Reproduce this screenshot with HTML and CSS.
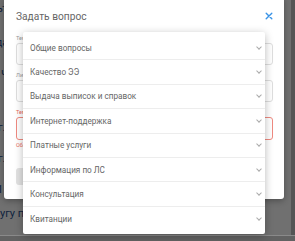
FILE: index.html
```html
<!DOCTYPE html>
<html lang="ru">
<head>
    <meta charset="UTF-8">
    <meta name="viewport" content="width=device-width, initial-scale=1.0">
    <title>Задать вопрос</title>
    <link rel="stylesheet" href="styles.css">
</head>
<body>
    <!-- Page behind the dialog -->
    <div class="page">
        <p class="link line-1">Консультация по тарифам и начислениям подробнее</p>
        <p class="link line-2">Передать показания и получить ответ по обращению</p>
        <p class="link line-3">1 Частые вопросы</p>
        <p class="link line-4">г. Обслуживание</p>
        <p class="link line-5">г. Центры</p>
        <p class="link line-6">1 Документы</p>
        <p class="link line-7">угу по ЛС</p>
    </div>

    <div class="backdrop"></div>
    <div class="scrollbar"></div>
    <div class="hbar"></div>

    <div class="modal">
        <div class="modal-head">
            <span class="modal-title">Задать вопрос</span>
            <svg class="close" width="8" height="8" viewBox="0 0 8 8">
                <path d="M1.2 1.2 L6.8 6.8 M6.8 1.2 L1.2 6.8" stroke="#3a93e6" stroke-width="1.4" stroke-linecap="round"/>
            </svg>
        </div>
        <div class="form">
            <label class="label">Тема</label>
            <div class="input"></div>
            <label class="label">Лицевой счёт</label>
            <div class="input"></div>
            <label class="label error">Тема вопроса</label>
            <div class="input invalid"></div>
            <span class="hint error">Обязательное поле</span>
            <button class="btn">Отправить</button>
        </div>
    </div>

    <ul class="menu">
        <li>Общие вопросы</li>
        <li>Качество ЭЭ</li>
        <li>Выдача выписок и справок</li>
        <li>Интернет-поддержка</li>
        <li>Платные услуги</li>
        <li>Информация по ЛС</li>
        <li>Консультация</li>
        <li>Квитанции</li>
    </ul>
</body>
</html>
```

FILE: styles.css
```css
body {
    margin: 0;
    width: 295px;
    height: 241px;
    overflow: hidden;
    font-family: Roboto, 'Liberation Sans', sans-serif;
    background-color: #fff;
    position: relative;
}

.link {
    position: absolute;
    margin: 0;
    left: -2px;
    font-size: 11px;
    color: #1f4f8f;
    white-space: nowrap;
}

.line-1 { top: 2px; left: -40px; }
.line-2 { top: 36px; left: -30px; }
.line-3 { top: 68px; left: -8px; }
.line-4 { top: 121px; }
.line-5 { top: 152px; }
.line-6 { top: 183px; left: -3px; }
.line-7 { top: 207px; left: 0; }

.backdrop {
    position: absolute;
    inset: 0;
    background: rgba(0, 0, 0, 0.56);
}

.scrollbar {
    position: absolute;
    top: 0;
    right: 0;
    width: 4px;
    height: 236px;
    background: #555;
}

.hbar {
    position: absolute;
    left: 0;
    bottom: 0;
    width: 295px;
    height: 5px;
    background: #626262;
    border-top: 1px solid #8a8a8a;
}

.modal {
    position: absolute;
    left: 4px;
    top: -4px;
    width: 280px;
    height: 203px;
    background: #fff;
    border-radius: 3px;
    box-shadow: 0 2px 6px rgba(0, 0, 0, 0.3);
}

.modal-head {
    display: flex;
    align-items: center;
    justify-content: space-between;
    height: 40px;
    padding: 0 11px 0 12px;
}

.modal-title {
    font-size: 10.2px;
    color: #666;
}

.close {
    display: block;
}

.form {
    display: flex;
    flex-direction: column;
    align-items: flex-start;
    padding: 0 11px 0 12px;
}

.label {
    font-size: 5.5px;
    color: #999;
    height: 7px;
    line-height: 4px;
}

.input {
    width: 100%;
    box-sizing: border-box;
    height: 22px;
    margin: 0 0 8px;
    border: 1px solid #dedede;
    border-radius: 3px;
}

.input.invalid {
    border-color: #ef8a80;
    height: 23px;
    margin-bottom: 1px;
}

.error {
    color: #e8675a;
}

.hint {
    font-size: 5.5px;
    height: 9px;
    line-height: 9px;
}

.btn {
    margin-top: 18px;
    width: 70px;
    height: 17px;
    border: none;
    border-radius: 3px;
    background: #e2e2e2;
    font-size: 8px;
    color: #999;
    font-family: inherit;
}

.menu {
    position: absolute;
    left: 23px;
    top: 32px;
    width: 242px;
    margin: 0;
    padding: 4px 0 3px;
    list-style: none;
    background: #fff;
    border-radius: 2px;
    box-shadow: 0 2px 8px rgba(0, 0, 0, 0.28);
}

.menu li {
    display: flex;
    align-items: center;
    justify-content: space-between;
    box-sizing: border-box;
    height: 24.4px;
    padding: 0 4px 0 7px;
    font-size: 8.2px;
    color: #666;
    border-bottom: 1px solid #ededed;
}

.menu li:last-child {
    border-bottom: none;
}

.menu li::after {
    content: '';
    width: 3px;
    height: 3px;
    margin-top: -2px;
    border-right: 1px solid #aaa;
    border-bottom: 1px solid #aaa;
    transform: rotate(45deg);
}
```
